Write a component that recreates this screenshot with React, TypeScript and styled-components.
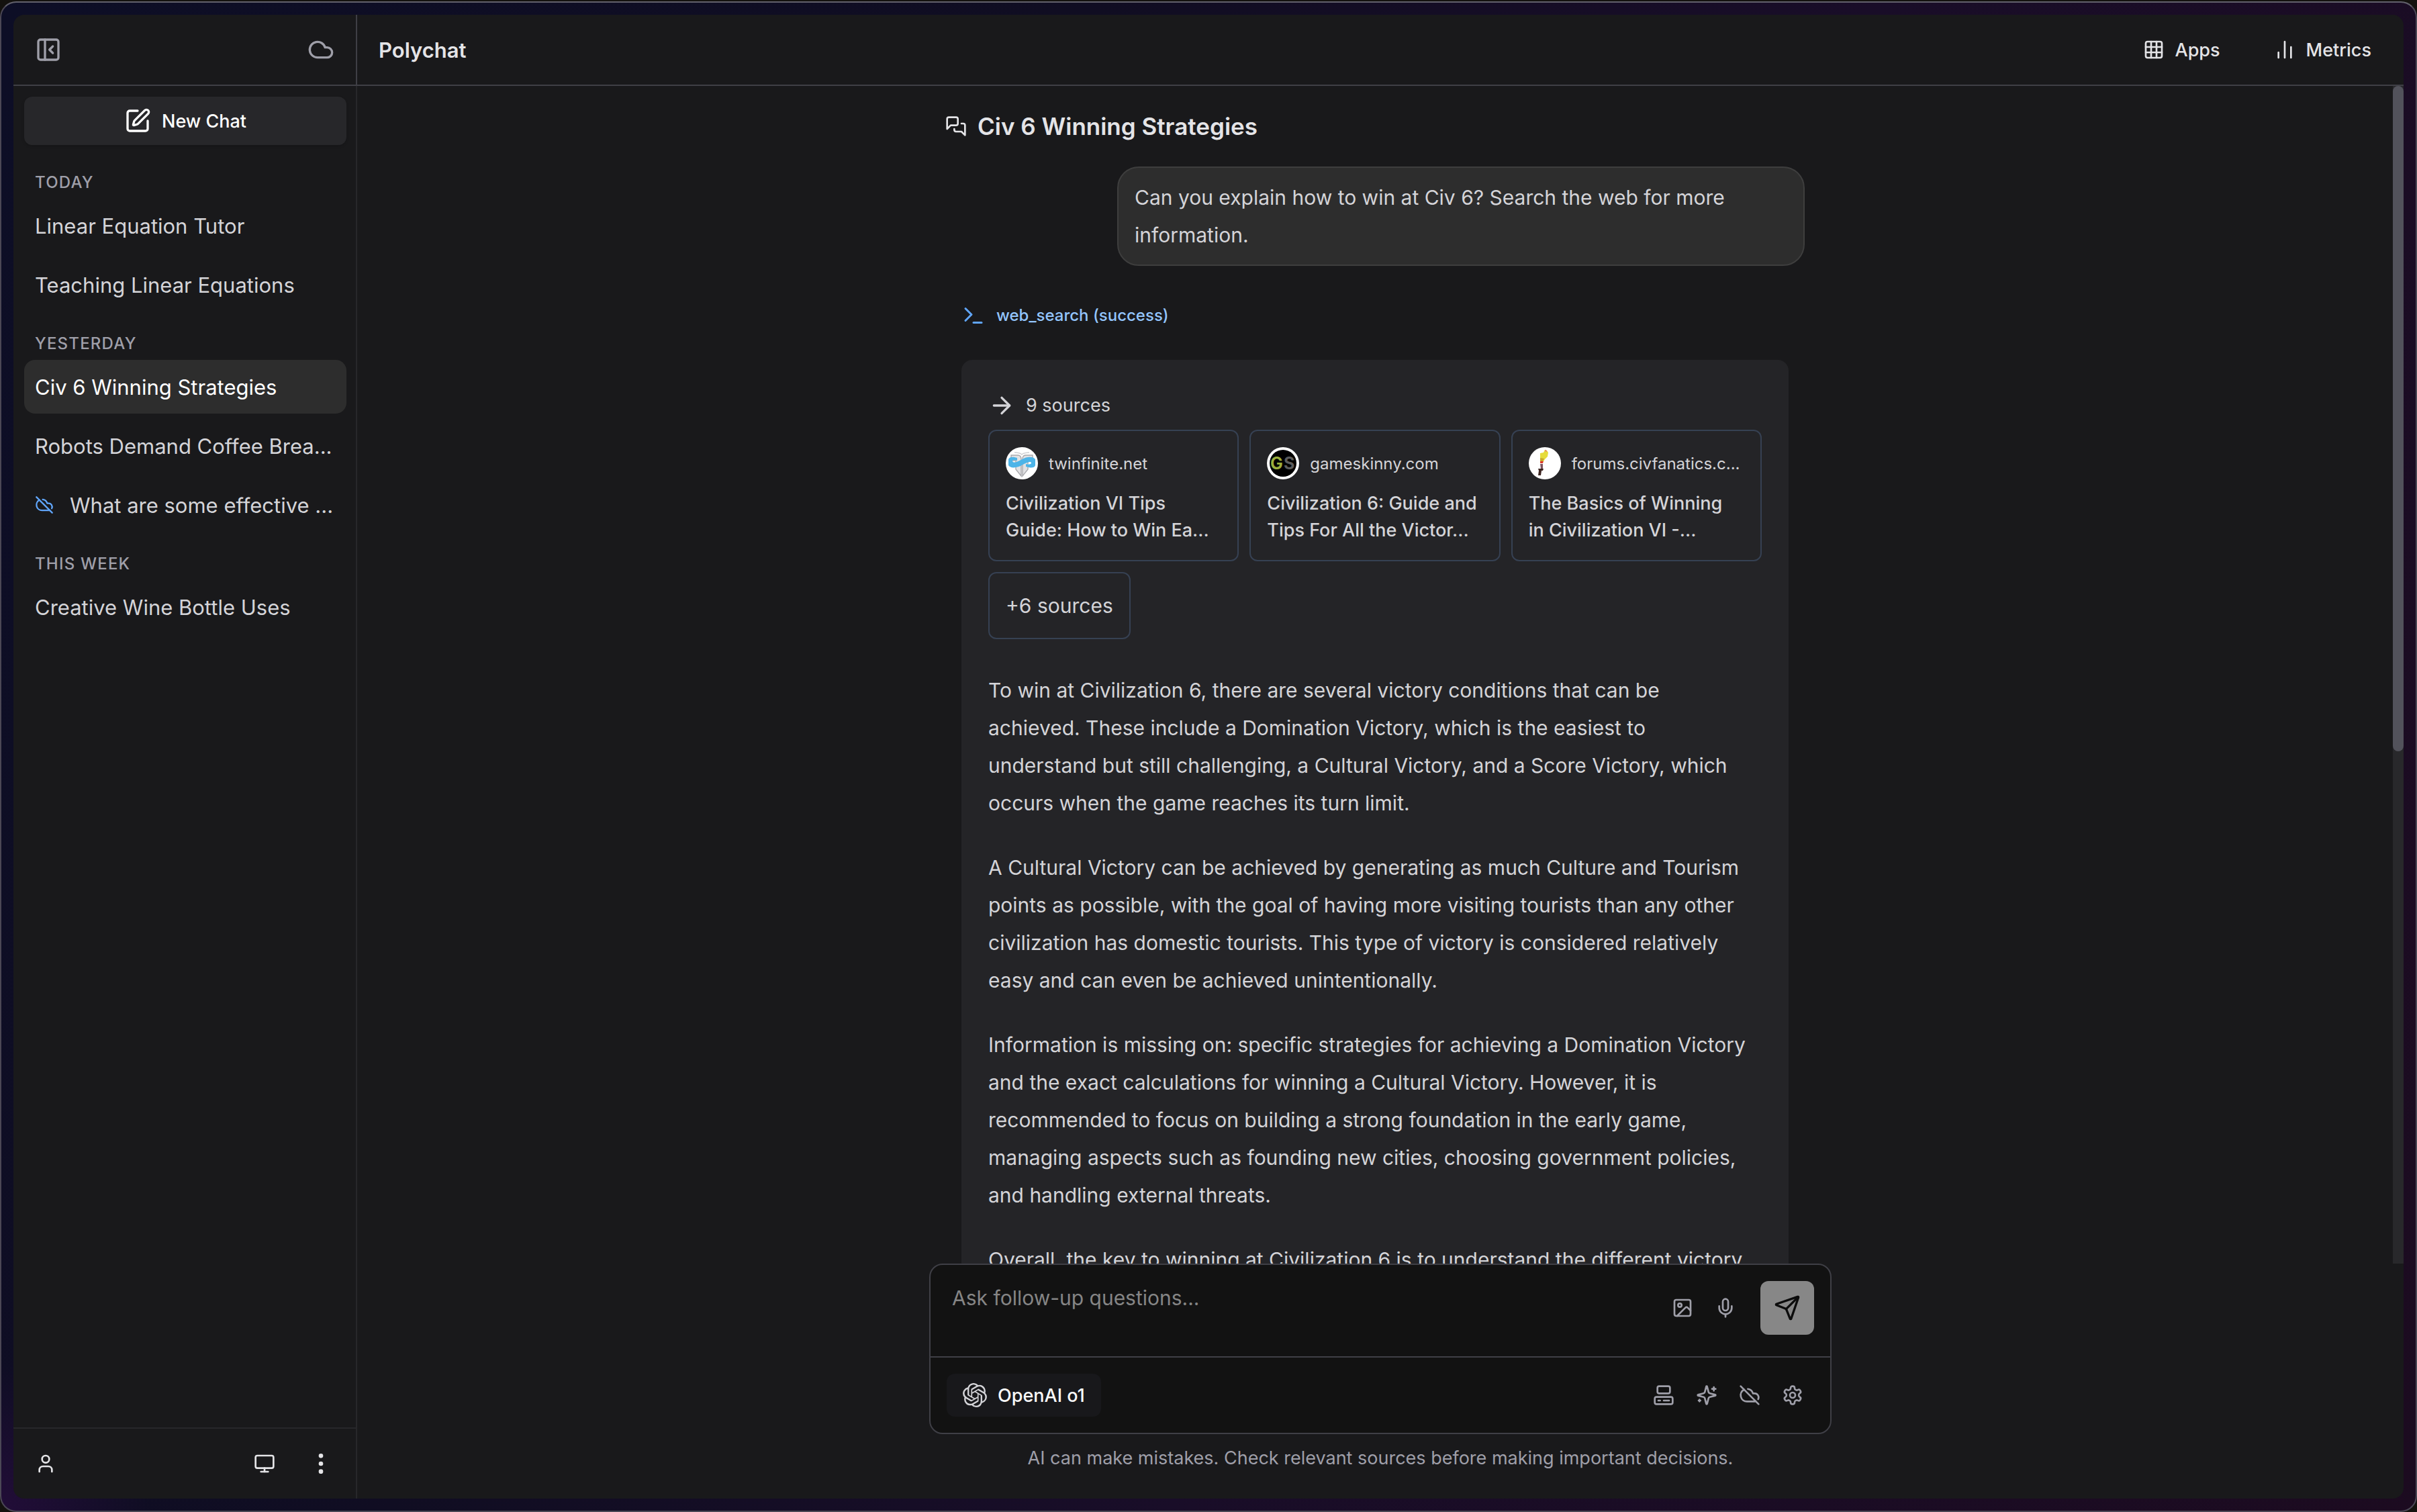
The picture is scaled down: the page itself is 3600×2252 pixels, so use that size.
import React from 'react';
import styled, { createGlobalStyle, css } from 'styled-components';
import {
  ArrowRight,
  ChartNoAxesColumn,
  Cloud,
  CloudOff,
  Computer,
  EllipsisVertical,
  Grid3x3,
  Image as ImageIcon,
  Mic,
  Monitor,
  PanelLeftClose,
  Send,
  SquarePen,
  Terminal,
  User,
} from 'lucide-react';

const color = {
  page: '#19191b',
  panel: '#242427',
  raised: '#27272a',
  active: '#2d2d2d',
  line: '#3f3f46',
  lineSoft: '#27272a',
  cardLine: '#364153',
  text: '#d4d4d8',
  strong: '#e4e4e7',
  white: '#fafafa',
  muted: '#9f9fa9',
  field: '#121212',
  blue: '#60a5fa',
  blueSoft: '#93c5fd',
};

const size = { xs: '24px', sm: '27px', reading: '30px', md: '31px', lg: '35px' };

const GlobalStyle = createGlobalStyle`
  *, *::before, *::after { box-sizing: border-box; }
  html, body, #root { height: 100%; }
  body {
    margin: 0;
    background: #14120f;
    color: ${color.text};
    font-family: Inter, 'Liberation Sans', sans-serif;
    font-size: ${size.md};
    -webkit-font-smoothing: antialiased;
  }
  h1, h2, h3, p, ul { margin: 0; padding: 0; }
  ul { list-style: none; }
  a { color: inherit; text-decoration: none; }
  button, textarea { font: inherit; color: inherit; }
  svg { display: block; flex: none; }
`;

const Desktop = styled.div`
  height: 100%;
  padding-top: 2px;
`;

const Frame = styled.div`
  height: 100%;
  padding: 18px;
  border: 2px solid #4b4755;
  border-top-color: #62616c;
  border-radius: 24px;
  background:
    radial-gradient(circle at 0% 100%, #220d38 0, transparent 220px),
    linear-gradient(115deg, #0d0e26 0%, #100d22 35%, #190d28 60%, #1c0b20 100%);
`;

const Shell = styled.div`
  display: flex;
  height: 100%;
  overflow: hidden;
  border-radius: 16px;
  background: ${color.page};
`;

const Sidebar = styled.aside`
  display: flex;
  flex: none;
  flex-direction: column;
  width: 512px;
`;

const bar = css`
  display: flex;
  flex: none;
  align-items: center;
  justify-content: space-between;
  height: 106px;
`;

const SidebarTop = styled.div`
  ${bar}
  padding: 0 32px;
  border-right: 2px solid ${color.line};
  border-bottom: 2px solid ${color.line};
  color: ${color.muted};
`;

const SidebarBody = styled.div`
  display: flex;
  flex: 1;
  flex-direction: column;
  gap: 40px;
  padding: 16px 14px 16px 16px;
  border-right: 2px solid ${color.lineSoft};
`;

const SidebarBottom = styled.div`
  ${bar}
  padding: 0 32px;
  border-top: 2px solid ${color.lineSoft};
  border-right: 2px solid ${color.lineSoft};
  color: ${color.strong};
`;

const ButtonGroup = styled.div<{ $gap?: number }>`
  display: flex;
  align-items: center;
  gap: ${(p) => p.$gap ?? 0}px;
`;

const IconButton = styled.button<{ $pad?: number }>`
  display: flex;
  align-items: center;
  justify-content: center;
  padding: ${(p) => p.$pad ?? 0}px;
  border: 0;
  background: none;
`;

const NewChat = styled.button`
  display: flex;
  align-items: center;
  justify-content: center;
  gap: 16px;
  height: 72px;
  border: 0;
  border-radius: 12px;
  background: ${color.raised};
  box-shadow: 0 2px 4px rgba(0, 0, 0, 0.15);
  color: #fff;
  font-size: ${size.sm};
  font-weight: 500;
`;

const History = styled.nav`
  display: flex;
  flex-direction: column;
  gap: 32px;
`;

const HistoryTitle = styled.h3`
  margin-bottom: 8px;
  padding: 0 16px;
  color: ${color.muted};
  font-size: ${size.xs};
  font-weight: 500;
  line-height: 32px;
  text-transform: uppercase;
  letter-spacing: 0.05em;
`;

const HistoryList = styled.ul`
  display: flex;
  flex-direction: column;
  gap: 8px;
`;

const HistoryItem = styled.button<{ $active?: boolean }>`
  display: flex;
  align-items: center;
  gap: 24px;
  width: 100%;
  height: 80px;
  padding: 0 16px;
  border: 0;
  border-radius: 16px;
  background: ${(p) => (p.$active ? color.active : 'none')};
  color: ${(p) => (p.$active ? '#fff' : color.text)};
  text-align: left;
  white-space: nowrap;

  svg { color: ${color.blue}; }
`;

const Main = styled.main`
  display: flex;
  flex: 1;
  flex-direction: column;
  min-width: 0;
`;

const TopBar = styled.header`
  ${bar}
  padding: 0 48px 0 32px;
  border-bottom: 2px solid ${color.line};
  color: ${color.strong};
`;

const Brand = styled.h1`
  font-size: ${size.md};
  font-weight: 600;
`;

const TopLink = styled.a`
  display: flex;
  align-items: center;
  gap: 16px;
  font-size: ${size.sm};
  font-weight: 500;
`;

const ScrollRegion = styled.div`
  display: flex;
  flex: 1;
  min-height: 0;
  overflow: hidden;
`;

const Thread = styled.section`
  flex: 1;
  min-width: 0;
  padding-top: 32px;
`;

const ThreadColumn = styled.div`
  display: flex;
  flex-direction: column;
  max-width: 1344px;
  margin: 0 auto;
  padding: 0 32px;
`;

const ScrollTrack = styled.div`
  flex: none;
  width: 16px;
  background: #28282b;
`;

const ScrollThumb = styled.div`
  height: 56.5%;
  border-radius: 8px;
  background: #52525b;
`;

const ThreadTitle = styled.h2`
  display: flex;
  align-items: center;
  gap: 16px;
  margin-bottom: 32px;
  color: ${color.strong};
  font-size: ${size.lg};
  font-weight: 600;
  line-height: 56px;
`;

const UserBubble = styled.p`
  align-self: flex-end;
  width: 80%;
  padding: 16px 24px;
  border: 2px solid #3e3e3e;
  border-radius: 32px;
  background: ${color.active};
  font-size: ${size.reading};
  line-height: 56px;
`;

const ToolCall = styled.div`
  display: flex;
  align-items: center;
  gap: 16px;
  margin: 56px 24px 48px;
  color: ${color.blueSoft};
  font-size: ${size.xs};
  font-weight: 500;
  line-height: 36px;

  svg { color: ${color.blue}; }
`;

const Answer = styled.article`
  display: flex;
  flex-direction: column;
  margin: 0 24px;
  padding: 40px;
  border-radius: 16px;
  background: ${color.panel};
`;

const SourcesHead = styled.button`
  display: flex;
  align-items: center;
  align-self: flex-start;
  gap: 16px;
  margin-bottom: 8px;
  padding: 0;
  border: 0;
  background: none;
  font-size: ${size.sm};
  line-height: 56px;
`;

const Sources = styled.div`
  display: grid;
  grid-template-columns: repeat(3, minmax(0, 1fr));
  gap: 16px;
`;

const sourceBox = css`
  padding: 24px;
  border: 2px solid ${color.cardLine};
  border-radius: 12px;
`;

const SourceCard = styled.a`
  ${sourceBox}
  display: flex;
  flex-direction: column;
  gap: 16px;
  white-space: nowrap;
`;

const SourceSite = styled.span`
  display: flex;
  align-items: center;
  gap: 16px;
  font-size: ${size.xs};
`;

const SourceTitle = styled.span`
  font-size: ${size.sm};
  font-weight: 500;
  line-height: 40px;
`;

const MoreSources = styled.button`
  ${sourceBox}
  justify-self: start;
  background: none;
  font-size: ${size.reading};
  line-height: 48px;
`;

const Prose = styled.div`
  display: flex;
  flex-direction: column;
  gap: 40px;
  margin-top: 48px;
  font-size: ${size.reading};
  line-height: 56px;
  white-space: pre-line;
`;

const Footer = styled.footer`
  display: flex;
  flex: none;
  flex-direction: column;
  gap: 16px;
  width: 100%;
  max-width: 1344px;
  margin: 0 auto;
  padding-bottom: 40px;
`;

const Composer = styled.form`
  border: 2px solid ${color.line};
  border-radius: 20px;
  background: ${color.field};
  color: ${color.muted};
`;

const ComposerTop = styled.div`
  display: flex;
  align-items: flex-start;
  gap: 20px;
  padding: 24px 24px 32px 32px;
  border-bottom: 2px solid ${color.line};
`;

const Prompt = styled.textarea`
  flex: 1;
  height: 80px;
  padding: 0;
  border: 0;
  outline: 0;
  resize: none;
  background: none;
  font-size: ${size.reading};
  line-height: 50px;

  &::placeholder { color: #858585; opacity: 1; }
`;

const InputTools = styled.div`
  display: flex;
  align-items: center;
  height: 80px;
`;

const SendButton = styled.button`
  display: flex;
  align-items: center;
  justify-content: center;
  width: 80px;
  height: 80px;
  padding: 0;
  border: 0;
  border-radius: 12px;
  background: #878787;
  color: #0c0c0c;
`;

const ComposerBottom = styled.div`
  display: flex;
  align-items: center;
  justify-content: space-between;
  padding: 24px;
`;

const ModelButton = styled.button`
  display: flex;
  align-items: center;
  gap: 16px;
  height: 64px;
  padding: 0 24px;
  border: 0;
  border-radius: 12px;
  background: #18181b;
  color: ${color.white};
  font-size: ${size.sm};
  font-weight: 500;

  svg { color: ${color.text}; }
`;

const Disclaimer = styled.p`
  color: ${color.muted};
  font-size: ${size.sm};
  line-height: 40px;
  text-align: center;
`;

const stroke = {
  viewBox: '0 0 24 24',
  fill: 'none',
  stroke: 'currentColor',
  strokeWidth: 2,
  strokeLinecap: 'round',
  strokeLinejoin: 'round',
  'aria-hidden': true,
} as const;

const ChatsIcon = () => (
  <svg width="32" height="32" {...stroke}>
    <path d="M14 9a2 2 0 0 1-2 2H6l-4 4V4a2 2 0 0 1 2-2h8a2 2 0 0 1 2 2z" />
    <path d="M18 9h2a2 2 0 0 1 2 2v11l-4-4h-6a2 2 0 0 1-2-2v-1" />
  </svg>
);

const SparklesIcon = () => (
  <svg width="32" height="32" {...stroke}>
    <path d="M9.937 15.5A2 2 0 0 0 8.5 14.063l-6.135-1.582a.5.5 0 0 1 0-.962L8.5 9.936A2 2 0 0 0 9.937 8.5l1.582-6.135a.5.5 0 0 1 .963 0L14.063 8.5A2 2 0 0 0 15.5 9.937l6.135 1.581a.5.5 0 0 1 0 .964L15.5 14.063a2 2 0 0 0-1.437 1.437l-1.582 6.135a.5.5 0 0 1-.963 0z" />
    <path d="M20 3v4M22 5h-4M4 17v2M5 18H3" />
  </svg>
);

const GearIcon = () => (
  <svg width="32" height="32" {...stroke}>
    <path d="M12.22 2h-.44a2 2 0 0 0-2 2v.18a2 2 0 0 1-1 1.73l-.43.25a2 2 0 0 1-2 0l-.15-.08a2 2 0 0 0-2.73.73l-.22.38a2 2 0 0 0 .73 2.73l.15.1a2 2 0 0 1 1 1.72v.51a2 2 0 0 1-1 1.74l-.15.09a2 2 0 0 0-.73 2.73l.22.38a2 2 0 0 0 2.73.73l.15-.08a2 2 0 0 1 2 0l.43.25a2 2 0 0 1 1 1.73V20a2 2 0 0 0 2 2h.44a2 2 0 0 0 2-2v-.18a2 2 0 0 1 1-1.73l.43-.25a2 2 0 0 1 2 0l.15.08a2 2 0 0 0 2.73-.73l.22-.39a2 2 0 0 0-.73-2.73l-.15-.08a2 2 0 0 1-1-1.74v-.5a2 2 0 0 1 1-1.74l.15-.09a2 2 0 0 0 .73-2.73l-.22-.38a2 2 0 0 0-2.73-.73l-.15.08a2 2 0 0 1-2 0l-.43-.25a2 2 0 0 1-1-1.73V4a2 2 0 0 0-2-2z" />
    <circle cx="12" cy="12" r="3" />
  </svg>
);

const OpenAIIcon = () => (
  <svg width="36" height="36" viewBox="0 0 24 24" fill="currentColor" aria-hidden>
    <path d="M22.2819 9.8211a5.9847 5.9847 0 0 0-.5157-4.9108 6.0462 6.0462 0 0 0-6.5098-2.9A6.0651 6.0651 0 0 0 4.9807 4.1818a5.9847 5.9847 0 0 0-3.9977 2.9 6.0462 6.0462 0 0 0 .7427 7.0966 5.98 5.98 0 0 0 .511 4.9107 6.051 6.051 0 0 0 6.5146 2.9001A5.9847 5.9847 0 0 0 13.2599 24a6.0557 6.0557 0 0 0 5.7718-4.2058 5.9894 5.9894 0 0 0 3.9977-2.9001 6.0557 6.0557 0 0 0-.7475-7.0729zm-9.022 12.6081a4.4755 4.4755 0 0 1-2.8764-1.0408l.1419-.0804 4.7783-2.7582a.7948.7948 0 0 0 .3927-.6813v-6.7369l2.02 1.1686a.071.071 0 0 1 .038.052v5.5826a4.504 4.504 0 0 1-4.4945 4.4944zm-9.6607-4.1254a4.4708 4.4708 0 0 1-.5346-3.0137l.142.0852 4.783 2.7582a.7712.7712 0 0 0 .7806 0l5.8428-3.3685v2.3324a.0804.0804 0 0 1-.0332.0615L9.74 19.9502a4.4992 4.4992 0 0 1-6.1408-1.6464zM2.3408 7.8956a4.485 4.485 0 0 1 2.3655-1.9728V11.6a.7664.7664 0 0 0 .3879.6765l5.8144 3.3543-2.0201 1.1685a.0757.0757 0 0 1-.071 0l-4.8303-2.7865A4.504 4.504 0 0 1 2.3408 7.872zm16.5963 3.8558L13.1038 8.364 15.1192 7.2a.0757.0757 0 0 1 .071 0l4.8303 2.7913a4.4944 4.4944 0 0 1-.6765 8.1042v-5.6772a.79.79 0 0 0-.407-.667zm2.0107-3.0231l-.142-.0852-4.7735-2.7818a.7759.7759 0 0 0-.7854 0L9.409 9.2297V6.8974a.0662.0662 0 0 1 .0284-.0615l4.8303-2.7866a4.4992 4.4992 0 0 1 6.6802 4.66zM8.3065 12.863l-2.02-1.1638a.0804.0804 0 0 1-.038-.0567V6.0742a4.4992 4.4992 0 0 1 7.3757-3.4537l-.142.0805L8.704 5.459a.7948.7948 0 0 0-.3927.6813zm1.0976-2.3654l2.602-1.4998 2.6069 1.4998v2.9994l-2.5974 1.4997-2.6067-1.4997Z" />
  </svg>
);

const TwinfiniteIcon = () => (
  <svg width="48" height="48" viewBox="0 0 48 48" aria-hidden>
    <circle cx="24" cy="24" r="24" fill="#fff" />
    <path d="M8 12h10c3 0 5 2 5 6v25l-8-10V20H8z" fill="#e2e2e4" stroke="#a9a9ad" strokeWidth="1.4" />
    <path d="M40 12H30c-3 0-5 2-5 6v25l8-10V20h7z" fill="#e2e2e4" stroke="#a9a9ad" strokeWidth="1.4" />
    <path d="M13 8c6 0 9 1 11 3 2-2 5-3 11-3" fill="none" stroke="#cfcfd2" strokeWidth="1.4" />
    <path
      d="M4 18c1-3 5-4 9-3l4 1v4c-3-1-6-1-7 0 0 3 3 3 6 2 6-2 10-6 17-7 5-1 9 0 11 3v9c-1 4-6 4-10 3l-4-1v-4c3 1 7 1 8-1 0-3-3-2-6-1-6 2-10 6-17 7-5 1-9 0-11-3z"
      fill="#4db4e8"
    />
  </svg>
);

const GameSkinnyIcon = () => (
  <svg width="48" height="48" viewBox="0 0 48 48" aria-hidden>
    <circle cx="24" cy="24" r="24" fill="#fff" />
    <circle cx="24" cy="24" r="20" fill="#000" />
    <text x="5" y="33" fontFamily="Inter, sans-serif" fontSize="25" fontWeight="700" fill="#9aae3c">G</text>
    <text x="25" y="33" fontFamily="Inter, sans-serif" fontSize="25" fontWeight="700" fill="#5c5c5c">S</text>
  </svg>
);

const CivFanaticsIcon = () => (
  <svg width="48" height="48" viewBox="0 0 48 48" aria-hidden>
    <circle cx="24" cy="24" r="24" fill="#fff" />
    <path d="M17 9l5-1 2-4 3 1 2 3-1 6-4 4-2 3-5 1z" fill="#e6dc3a" />
    <path d="M24 4l2 0 1 3-2 0z" fill="#ee8a6a" />
    <path d="M17 16l6 1-2 4h-4z" fill="#c9a92c" />
    <path d="M17 21h5l-1 3h-4z" fill="#dd3a2a" />
    <path d="M17 25h4l0 7h-3z" fill="#7d5560" />
    <path d="M14 32h8l-1 3h-2l-1 7h-4l1-7z" fill="#3c2420" />
  </svg>
);

type Chat = { title: string; local?: boolean; active?: boolean };

const history: { label: string; chats: Chat[] }[] = [
  { label: 'Today', chats: [{ title: 'Linear Equation Tutor' }, { title: 'Teaching Linear Equations' }] },
  {
    label: 'Yesterday',
    chats: [
      { title: 'Civ 6 Winning Strategies', active: true },
      { title: 'Robots Demand Coffee Brea...' },
      { title: 'What are some effective ...', local: true },
    ],
  },
  { label: 'This week', chats: [{ title: 'Creative Wine Bottle Uses' }] },
];

const sources = [
  { site: 'twinfinite.net', icon: <TwinfiniteIcon />, lines: ['Civilization VI Tips', 'Guide: How to Win Ea...'] },
  { site: 'gameskinny.com', icon: <GameSkinnyIcon />, lines: ['Civilization 6: Guide and', 'Tips For All the Victor...'] },
  { site: 'forums.civfanatics.c...', icon: <CivFanaticsIcon />, lines: ['The Basics of Winning', 'in Civilization VI -...'] },
];

const paragraphs = [
  `To win at Civilization 6, there are several victory conditions that can be
achieved. These include a Domination Victory, which is the easiest to
understand but still challenging, a Cultural Victory, and a Score Victory, which
occurs when the game reaches its turn limit.`,
  `A Cultural Victory can be achieved by generating as much Culture and Tourism
points as possible, with the goal of having more visiting tourists than any other
civilization has domestic tourists. This type of victory is considered relatively
easy and can even be achieved unintentionally.`,
  `Information is missing on: specific strategies for achieving a Domination Victory
and the exact calculations for winning a Cultural Victory. However, it is
recommended to focus on building a strong foundation in the early game,
managing aspects such as founding new cities, choosing government policies,
and handling external threats.`,
  `Overall, the key to winning at Civilization 6 is to understand the different victory`,
];

export default function App() {
  return (
    <>
      <GlobalStyle />
      <Desktop>
        <Frame>
          <Shell>
            <Sidebar>
              <SidebarTop>
                <IconButton type="button" aria-label="Collapse sidebar">
                  <PanelLeftClose size={40} />
                </IconButton>
                <IconButton type="button" aria-label="Cloud storage">
                  <Cloud size={40} />
                </IconButton>
              </SidebarTop>
              <SidebarBody>
                <NewChat type="button">
                  <SquarePen size={40} />
                  New Chat
                </NewChat>
                <History aria-label="Chats">
                  {history.map((group) => (
                    <section key={group.label}>
                      <HistoryTitle>{group.label}</HistoryTitle>
                      <HistoryList>
                        {group.chats.map((chat) => (
                          <li key={chat.title}>
                            <HistoryItem type="button" $active={chat.active}>
                              {chat.local && <CloudOff size={28} />}
                              {chat.title}
                            </HistoryItem>
                          </li>
                        ))}
                      </HistoryList>
                    </section>
                  ))}
                </History>
              </SidebarBody>
              <SidebarBottom>
                <IconButton type="button" aria-label="Account">
                  <User size={32} />
                </IconButton>
                <ButtonGroup $gap={48}>
                  <IconButton type="button" aria-label="Theme">
                    <Monitor size={32} />
                  </IconButton>
                  <IconButton type="button" aria-label="More">
                    <EllipsisVertical size={40} />
                  </IconButton>
                </ButtonGroup>
              </SidebarBottom>
            </Sidebar>

            <Main>
              <TopBar>
                <Brand>Polychat</Brand>
                <ButtonGroup $gap={80}>
                  <TopLink href="#apps">
                    <Grid3x3 size={32} />
                    Apps
                  </TopLink>
                  <TopLink href="#metrics">
                    <ChartNoAxesColumn size={32} />
                    Metrics
                  </TopLink>
                </ButtonGroup>
              </TopBar>

              <ScrollRegion>
                <Thread>
                  <ThreadColumn>
                    <ThreadTitle>
                      <ChatsIcon />
                      Civ 6 Winning Strategies
                    </ThreadTitle>
                    <UserBubble>
                      Can you explain how to win at Civ 6? Search the web for more information.
                    </UserBubble>
                    <ToolCall>
                      <Terminal size={36} />
                      web_search (success)
                    </ToolCall>
                    <Answer>
                      <SourcesHead type="button">
                        <ArrowRight size={40} />
                        9 sources
                      </SourcesHead>
                      <Sources>
                        {sources.map((s) => (
                          <SourceCard key={s.site} href="#source">
                            <SourceSite>
                              {s.icon}
                              {s.site}
                            </SourceSite>
                            <SourceTitle>
                              {s.lines[0]}
                              <br />
                              {s.lines[1]}
                            </SourceTitle>
                          </SourceCard>
                        ))}
                        <MoreSources type="button">+6 sources</MoreSources>
                      </Sources>
                      <Prose>
                        {paragraphs.map((text) => (
                          <p key={text}>{text}</p>
                        ))}
                      </Prose>
                    </Answer>
                  </ThreadColumn>
                </Thread>
                <ScrollTrack>
                  <ScrollThumb />
                </ScrollTrack>
              </ScrollRegion>

              <Footer>
                <Composer>
                  <ComposerTop>
                    <Prompt aria-label="Message" placeholder="Ask follow-up questions..." />
                    <InputTools>
                      <IconButton type="button" aria-label="Add image" $pad={16}>
                        <ImageIcon size={32} />
                      </IconButton>
                      <IconButton type="button" aria-label="Dictate" $pad={16}>
                        <Mic size={32} />
                      </IconButton>
                    </InputTools>
                    <SendButton type="submit" aria-label="Send">
                      <Send size={40} />
                    </SendButton>
                  </ComposerTop>
                  <ComposerBottom>
                    <ModelButton type="button">
                      <OpenAIIcon />
                      OpenAI o1
                    </ModelButton>
                    <ButtonGroup>
                      <IconButton type="button" aria-label="Tools" $pad={16}>
                        <Computer size={32} />
                      </IconButton>
                      <IconButton type="button" aria-label="Enhance" $pad={16}>
                        <SparklesIcon />
                      </IconButton>
                      <IconButton type="button" aria-label="Local only" $pad={16}>
                        <CloudOff size={32} />
                      </IconButton>
                      <IconButton type="button" aria-label="Settings" $pad={16}>
                        <GearIcon />
                      </IconButton>
                    </ButtonGroup>
                  </ComposerBottom>
                </Composer>
                <Disclaimer>
                  AI can make mistakes. Check relevant sources before making important decisions.
                </Disclaimer>
              </Footer>
            </Main>
          </Shell>
        </Frame>
      </Desktop>
    </>
  );
}
